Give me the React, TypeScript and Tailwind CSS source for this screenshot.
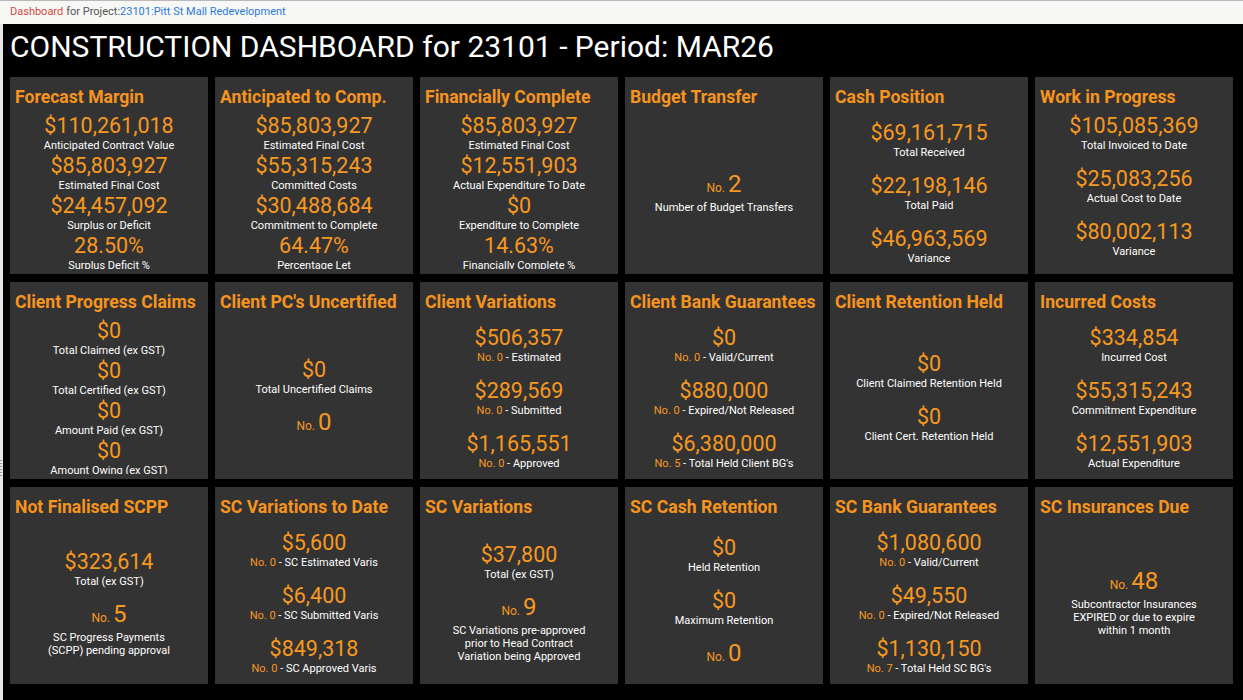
import type {ReactNode} from "react";

type Item =
  | {kind: "value"; value: string; label: string; no?: number}
  | {kind: "count"; n: number; lines?: string[]};

type Card = {
  title: string;
  layout: "tight" | "top" | "center";
  items: Item[];
};

const v = (value: string, label: string, no?: number): Item => ({kind: "value", value, label, no});
const c = (n: number, lines?: string[]): Item => ({kind: "count", n, lines});

const cards: Card[] = [
  {
    title: "Forecast Margin",
    layout: "tight",
    items: [
      v("$110,261,018", "Anticipated Contract Value"),
      v("$85,803,927", "Estimated Final Cost"),
      v("$24,457,092", "Surplus or Deficit"),
      v("28.50%", "Surplus Deficit %"),
    ],
  },
  {
    title: "Anticipated to Comp.",
    layout: "tight",
    items: [
      v("$85,803,927", "Estimated Final Cost"),
      v("$55,315,243", "Committed Costs"),
      v("$30,488,684", "Commitment to Complete"),
      v("64.47%", "Percentage Let"),
    ],
  },
  {
    title: "Financially Complete",
    layout: "tight",
    items: [
      v("$85,803,927", "Estimated Final Cost"),
      v("$12,551,903", "Actual Expenditure To Date"),
      v("$0", "Expenditure to Complete"),
      v("14.63%", "Financially Complete %"),
    ],
  },
  {
    title: "Budget Transfer",
    layout: "center",
    items: [c(2, ["Number of Budget Transfers"])],
  },
  {
    title: "Cash Position",
    layout: "center",
    items: [
      v("$69,161,715", "Total Received"),
      v("$22,198,146", "Total Paid"),
      v("$46,963,569", "Variance"),
    ],
  },
  {
    title: "Work in Progress",
    layout: "top",
    items: [
      v("$105,085,369", "Total Invoiced to Date"),
      v("$25,083,256", "Actual Cost to Date"),
      v("$80,002,113", "Variance"),
    ],
  },
  {
    title: "Client Progress Claims",
    layout: "tight",
    items: [
      v("$0", "Total Claimed (ex GST)"),
      v("$0", "Total Certified (ex GST)"),
      v("$0", "Amount Paid (ex GST)"),
      v("$0", "Amount Owing (ex GST)"),
    ],
  },
  {
    title: "Client PC's Uncertified",
    layout: "center",
    items: [v("$0", "Total Uncertified Claims"), c(0)],
  },
  {
    title: "Client Variations",
    layout: "center",
    items: [
      v("$506,357", "Estimated", 0),
      v("$289,569", "Submitted", 0),
      v("$1,165,551", "Approved", 0),
    ],
  },
  {
    title: "Client Bank Guarantees",
    layout: "center",
    items: [
      v("$0", "Valid/Current", 0),
      v("$880,000", "Expired/Not Released", 0),
      v("$6,380,000", "Total Held Client BG's", 5),
    ],
  },
  {
    title: "Client Retention Held",
    layout: "center",
    items: [v("$0", "Client Claimed Retention Held"), v("$0", "Client Cert. Retention Held")],
  },
  {
    title: "Incurred Costs",
    layout: "center",
    items: [
      v("$334,854", "Incurred Cost"),
      v("$55,315,243", "Commitment Expenditure"),
      v("$12,551,903", "Actual Expenditure"),
    ],
  },
  {
    title: "Not Finalised SCPP",
    layout: "center",
    items: [v("$323,614", "Total (ex GST)"), c(5, ["SC Progress Payments", "(SCPP) pending approval"])],
  },
  {
    title: "SC Variations to Date",
    layout: "center",
    items: [
      v("$5,600", "SC Estimated Varis", 0),
      v("$6,400", "SC Submitted Varis", 0),
      v("$849,318", "SC Approved Varis", 0),
    ],
  },
  {
    title: "SC Variations",
    layout: "center",
    items: [
      v("$37,800", "Total (ex GST)"),
      c(9, ["SC Variations pre-approved", "prior to Head Contract", "Variation being Approved"]),
    ],
  },
  {
    title: "SC Cash Retention",
    layout: "center",
    items: [v("$0", "Held Retention"), v("$0", "Maximum Retention"), c(0)],
  },
  {
    title: "SC Bank Guarantees",
    layout: "center",
    items: [
      v("$1,080,600", "Valid/Current", 0),
      v("$49,550", "Expired/Not Released", 0),
      v("$1,130,150", "Total Held SC BG's", 7),
    ],
  },
  {
    title: "SC Insurances Due",
    layout: "center",
    items: [c(48, ["Subcontractor Insurances", "EXPIRED or due to expire", "within 1 month"])],
  },
];

const bodyClass = {
  tight: "pt-1",
  top: "pt-1 gap-[13px]",
  center: "justify-center pt-[7px] gap-[13px]",
};

const Metric = ({item}: {item: Item}) => {
  if (item.kind === "count") {
    return (
      <div className="flex flex-col items-center">
        <div className="flex items-baseline justify-center leading-[25px] text-[#f7981f]">
          <span className="text-[12px]">No.</span>
          <span className="ml-[3px] text-[24px]">{item.n}</span>
        </div>
        {item.lines && (
          <div className="text-[11px] leading-[13px] text-white">
            {item.lines.map(line => (
              <div key={line}>{line}</div>
            ))}
          </div>
        )}
      </div>
    );
  }

  let label: ReactNode = item.label;
  if (item.no !== undefined) {
    label = (
      <>
        <span className="text-[#f7981f]">No. {item.no}</span> - {item.label}
      </>
    );
  }

  return (
    <div className="flex flex-col items-center">
      <div className="text-[21.5px] leading-[25px] text-[#f7981f]">{item.value}</div>
      <div className="whitespace-nowrap text-[11px] leading-[15px] text-white">{label}</div>
    </div>
  );
};

const DashCard = ({card}: {card: Card}) => (
  <div className="flex h-[197px] flex-col bg-[#333333] px-[5px] pt-[8px] pb-[5px]">
    <div className="whitespace-nowrap text-[17.6px] font-bold leading-[24px] text-[#f7941d]">{card.title}</div>
    <div className={`flex min-h-0 flex-1 flex-col items-center overflow-hidden text-center ${bodyClass[card.layout]}`}>
      {card.items.map((item, index) => (
        <Metric key={index} item={item} />
      ))}
    </div>
  </div>
);

export default function App() {
  return (
    <div className="flex h-[700px] w-[1243px] flex-col overflow-hidden font-[Roboto,'Liberation_Sans',sans-serif]">
      <div className="flex h-[24px] items-center border-t border-[#b9b9b9] bg-[#f7f8f6] pl-[10px] text-[11px]">
        <span className="text-[#d0493f]">Dashboard</span>
        <span className="ml-[3px] text-[#555555]">for Project:</span>
        <span className="text-[#2d7ad6]">23101:Pitt St Mall Redevelopment</span>
      </div>
      <div className="flex min-h-0 flex-1">
        {/* splitter strip with grip dots */}
        <div className="flex w-[3px] flex-col bg-[#e6e6e6]">
          <div className="mt-[436px] flex flex-col gap-[2px]">
            {[0, 1, 2, 3, 4, 5].map(i => (
              <div key={i} className="h-[1px] w-[2px] bg-[#9a9a9a]" />
            ))}
          </div>
        </div>
        <div className="flex-1 bg-black pl-[7px] pt-[5px]">
          <h1 className="mb-[12px] text-[30px] font-normal leading-[36px] text-white">
            CONSTRUCTION DASHBOARD for 23101 - Period: MAR26
          </h1>
          <div className="grid grid-cols-[repeat(6,198px)] gap-x-[7px] gap-y-[8px]">
            {cards.map(card => (
              <DashCard key={card.title} card={card} />
            ))}
          </div>
        </div>
      </div>
    </div>
  );
}
